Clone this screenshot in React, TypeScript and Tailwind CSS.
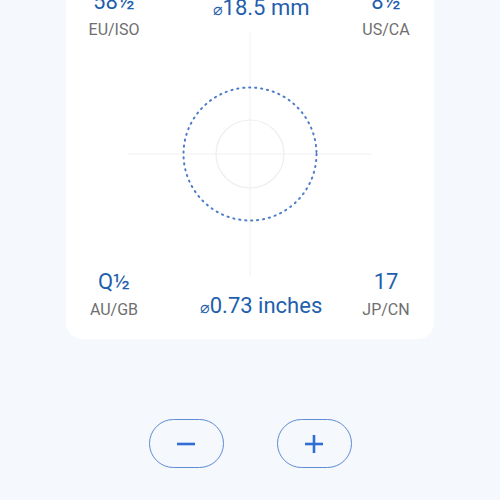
import { FC } from "react";

const SizeCell: FC<{ value: string; label: string }> = ({ value, label }) => (
  <div className="flex flex-col items-center">
    <div className="text-[22px] leading-[26px] text-[#1f5fae]">{value}</div>
    <div className="mt-[5px] text-[16px] leading-[20px] text-[#6f6f6f]">{label}</div>
  </div>
);

const Diameter: FC<{ text: string }> = ({ text }) => (
  <div className="pl-[22px] text-[22px] leading-[26px] text-[#1f5fae] text-center whitespace-nowrap">
    <span className="text-[16px]">⌀</span>
    {text}
  </div>
);

const Target: FC = () => (
  <svg width="244" height="244" viewBox="0 0 244 244" className="block">
    <line x1="122" y1="0" x2="122" y2="244" stroke="#f1f1f1" strokeWidth="1" />
    <line x1="0" y1="122" x2="244" y2="122" stroke="#f1f1f1" strokeWidth="1" />
    <circle cx="122" cy="122" r="34" fill="none" stroke="#eeeeee" strokeWidth="1.2" />
    <circle
      cx="122"
      cy="122"
      r="66.5"
      fill="none"
      stroke="#4d7cc8"
      strokeWidth="2"
      strokeDasharray="1.2 4.8"
      strokeLinecap="round"
    />
  </svg>
);

const App: FC = () => {
  return (
    <div className="min-h-[500px] w-[500px] bg-[#f5f8fd] font-['Roboto','Liberation_Sans',sans-serif] overflow-hidden">
      <div className="mx-[66px] -mt-[19px] pt-[8px] pb-[18px] bg-white rounded-[16px] flex flex-col">
        <div className="grid grid-cols-[96px_1fr_96px]">
          <SizeCell value="58½" label="EU/ISO" />
          <div className="pt-[6px]">
            <Diameter text="18.5 mm" />
          </div>
          <SizeCell value="8½" label="US/CA" />
        </div>
        <div className="flex justify-center -mt-[8px]">
          <Target />
        </div>
        <div className="grid grid-cols-[96px_1fr_96px] -mt-[7px]">
          <SizeCell value="Q½" label="AU/GB" />
          <div className="pt-[24px]">
            <Diameter text="0.73 inches" />
          </div>
          <SizeCell value="17" label="JP/CN" />
        </div>
      </div>
      <div className="flex justify-center gap-[53px] mt-[80px]">
        <button className="w-[75px] h-[49px] rounded-full border-[1.5px] border-[#5c8cd4] flex items-center justify-center">
          <svg width="20" height="20" viewBox="0 0 20 20">
            <line x1="1" y1="10" x2="19" y2="10" stroke="#2f6fd3" strokeWidth="2.6" />
          </svg>
        </button>
        <button className="w-[75px] h-[49px] rounded-full border-[1.5px] border-[#5c8cd4] flex items-center justify-center">
          <svg width="20" height="20" viewBox="0 0 20 20">
            <line x1="1" y1="10" x2="19" y2="10" stroke="#2f6fd3" strokeWidth="2.6" />
            <line x1="10" y1="1" x2="10" y2="19" stroke="#2f6fd3" strokeWidth="2.6" />
          </svg>
        </button>
      </div>
    </div>
  );
};

export default App;
